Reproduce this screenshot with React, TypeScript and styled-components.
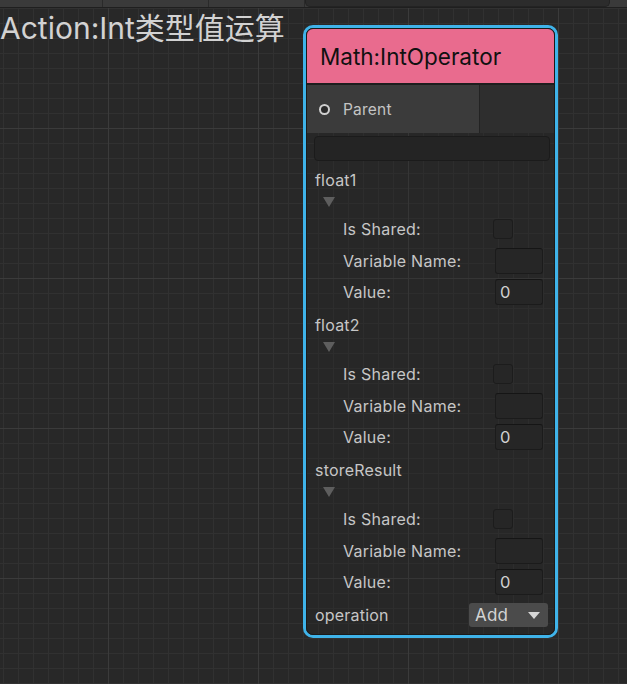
import React from "react";
import styled, { createGlobalStyle } from "styled-components";

const Global = createGlobalStyle`
  html, body { margin: 0; padding: 0; background: #282828; }
  body { font-family: Inter, "Noto Sans", "Noto Sans CJK SC", sans-serif; }
  * { box-sizing: border-box; }
`;

const Page = styled.div`
  position: relative;
  width: 627px;
  height: 684px;
  overflow: hidden;
  display: flex;
  flex-direction: column;
  background-color: #282828;
  background-image:
    linear-gradient(90deg, #3b3b3b 1px, transparent 1px),
    linear-gradient(180deg, #3b3b3b 1px, transparent 1px),
    linear-gradient(90deg, #313131 1px, transparent 1px),
    linear-gradient(180deg, #313131 1px, transparent 1px);
  background-size: 150px 150px, 150px 150px, 15px 15px, 15px 15px;
  background-position: 108px 0, 0 128px, 3px 0, 0 8px;
`;

const TopBar = styled.div`
  height: 8px;
  display: flex;
  background: #3a3a3a;
  border-bottom: 1px solid #1f1f1f;
  flex-shrink: 0;
`;

const BarSeg = styled.div<{ $w: number }>`
  width: ${(p) => p.$w}px;
  height: 100%;
  border-right: 1px solid #2a2a2a;
`;

const BarField = styled.div`
  width: 305px;
  height: 100%;
  background: #2c2c2c;
  border: 1px solid #232323;
  border-top: none;
  border-radius: 0 0 5px 5px;
`;

const Title = styled.div`
  position: absolute;
  left: 0;
  top: 12px;
  height: 32px;
  line-height: 32px;
  font-size: 30px;
  color: #d2d2d2;
  white-space: nowrap;
  font-family: Inter, "Noto Sans CJK SC", sans-serif;
`;

const NodeFrame = styled.div`
  position: absolute;
  left: 303px;
  top: 25px;
  width: 255px;
  height: 613px;
  border: 3px solid #3fb3e9;
  border-radius: 10px;
`;

const NodeInner = styled.div`
  height: 100%;
  border: 1px solid #1a1a1a;
  border-radius: 7px;
  overflow: hidden;
  display: flex;
  flex-direction: column;
  background: rgba(36, 36, 36, 0.25);
`;

const Header = styled.div`
  height: 56px;
  background: #e96b8e;
  display: flex;
  align-items: center;
  padding-left: 13px;
  font-size: 22.5px;
  color: #111;
  border-bottom: 2px solid #1e1e1e;
  flex-shrink: 0;
`;

const PortRow = styled.div`
  height: 48px;
  display: flex;
  flex-shrink: 0;
`;

const PortLeft = styled.div`
  width: 173px;
  background: #3b3b3b;
  border-right: 1px solid #232323;
  display: flex;
  align-items: center;
  padding-left: 12px;
  gap: 13px;
  font-size: 15.5px;
  letter-spacing: 0.2px;
  color: #c4c4c4;
`;

const PortRight = styled.div`
  flex: 1;
  background: #2e2e2e;
`;

const PortDot = styled.span`
  width: 11px;
  height: 11px;
  border-radius: 50%;
  border: 2px solid #cfcfcf;
  background: #2a2a2a;
`;

const Body = styled.div`
  display: flex;
  flex-direction: column;
  padding: 3px 4px 0 7px;
`;

const WideField = styled.div`
  height: 25px;
  background: #242424;
  border: 1px solid #1b1b1b;
  border-radius: 4px;
  margin-bottom: 8px;
`;

const GroupLabel = styled.div`
  height: 22px;
  display: flex;
  align-items: center;
  font-size: 16px;
  letter-spacing: 0.2px;
  color: #c6c6c6;
  padding-left: 1px;
`;

const Foldout = styled.div`
  height: 22px;
  display: flex;
  align-items: center;
  padding-left: 9px;
`;

const Tri = styled.span<{ $c: string; $w: number; $h: number }>`
  width: 0;
  height: 0;
  border-left: ${(p) => p.$w / 2}px solid transparent;
  border-right: ${(p) => p.$w / 2}px solid transparent;
  border-top: ${(p) => p.$h}px solid ${(p) => p.$c};
`;

const SubRow = styled.div<{ $h: number }>`
  height: ${(p) => p.$h}px;
  display: grid;
  grid-template-columns: 151px auto;
  align-items: center;
  padding-left: 29px;
  font-size: 16px;
  letter-spacing: 0.25px;
  color: #c6c6c6;
  white-space: nowrap;
`;

const Check = styled.div`
  width: 20px;
  height: 20px;
  margin-left: -1px;
  background: #262626;
  border: 1px solid #1c1c1c;
  border-radius: 3px;
`;

const TextBox = styled.div`
  width: 48px;
  height: 26px;
  margin-left: 1px;
  background: #262626;
  border: 1px solid #1b1b1b;
  border-top-color: #151515;
  border-radius: 3px;
  padding-left: 4px;
  display: flex;
  align-items: center;
  font-size: 16.5px;
  color: #d0d0d0;
`;

const Group = styled.div`
  display: flex;
  flex-direction: column;
  margin-bottom: 7px;
`;

const OpRow = styled.div`
  height: 24px;
  display: flex;
  align-items: center;
  justify-content: space-between;
  font-size: 16px;
  letter-spacing: 0.2px;
  color: #c6c6c6;
  padding-left: 1px;
  margin-top: -1px;
`;

const Dropdown = styled.div`
  width: 79px;
  height: 24px;
  margin-right: 2px;
  background: #4b4b4b;
  border-radius: 3px;
  display: flex;
  align-items: center;
  justify-content: space-between;
  padding: 0 8px 0 6px;
  font-size: 17px;
  color: #d4d4d4;
`;

const vars = ["float1", "float2", "storeResult"];

export default function App() {
  return (
    <Page>
      <Global />
      <TopBar>
        <BarSeg $w={103} />
        <BarSeg $w={106} />
        <BarSeg $w={96} />
        <BarField />
      </TopBar>
      <Title>Action:Int类型值运算</Title>
      <NodeFrame>
        <NodeInner>
          <Header>Math:IntOperator</Header>
          <PortRow>
            <PortLeft>
              <PortDot />
              Parent
            </PortLeft>
            <PortRight />
          </PortRow>
          <Body>
            <WideField />
            {vars.map((v) => (
              <Group key={v}>
                <GroupLabel>{v}</GroupLabel>
                <Foldout>
                  <Tri $c="#5e5e5e" $w={12} $h={10} />
                </Foldout>
                <SubRow $h={32}>
                  <span>Is Shared:</span>
                  <Check />
                </SubRow>
                <SubRow $h={31}>
                  <span>Variable Name:</span>
                  <TextBox />
                </SubRow>
                <SubRow $h={31}>
                  <span>Value:</span>
                  <TextBox>0</TextBox>
                </SubRow>
              </Group>
            ))}
            <OpRow>
              operation
              <Dropdown>
                Add
                <Tri $c="#d6d6d6" $w={12} $h={7} />
              </Dropdown>
            </OpRow>
          </Body>
        </NodeInner>
      </NodeFrame>
    </Page>
  );
}
